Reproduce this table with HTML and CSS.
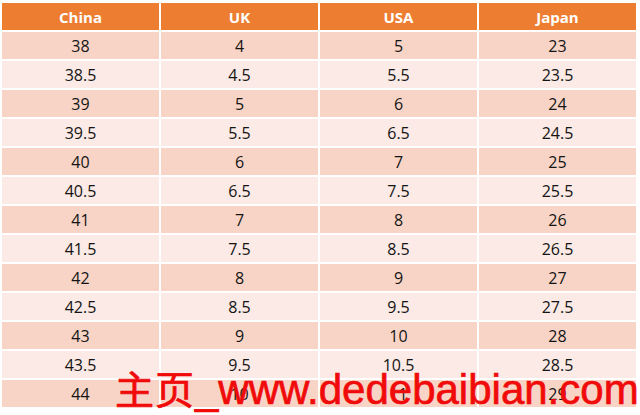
FILE: index.html
```html
<!DOCTYPE html>
<html>
<head>
<meta charset="utf-8">
<link rel="stylesheet" href="styles.css">
</head>
<body>
<div class="page">
  <div class="table">
    <div class="cell head">China</div><div class="cell head">UK</div><div class="cell head">USA</div><div class="cell head">Japan</div>
    <div class="cell odd">38</div><div class="cell odd">4</div><div class="cell odd">5</div><div class="cell odd">23</div>
    <div class="cell even">38.5</div><div class="cell even">4.5</div><div class="cell even">5.5</div><div class="cell even">23.5</div>
    <div class="cell odd">39</div><div class="cell odd">5</div><div class="cell odd">6</div><div class="cell odd">24</div>
    <div class="cell even">39.5</div><div class="cell even">5.5</div><div class="cell even">6.5</div><div class="cell even">24.5</div>
    <div class="cell odd">40</div><div class="cell odd">6</div><div class="cell odd">7</div><div class="cell odd">25</div>
    <div class="cell even">40.5</div><div class="cell even">6.5</div><div class="cell even">7.5</div><div class="cell even">25.5</div>
    <div class="cell odd">41</div><div class="cell odd">7</div><div class="cell odd">8</div><div class="cell odd">26</div>
    <div class="cell even">41.5</div><div class="cell even">7.5</div><div class="cell even">8.5</div><div class="cell even">26.5</div>
    <div class="cell odd">42</div><div class="cell odd">8</div><div class="cell odd">9</div><div class="cell odd">27</div>
    <div class="cell even">42.5</div><div class="cell even">8.5</div><div class="cell even">9.5</div><div class="cell even">27.5</div>
    <div class="cell odd">43</div><div class="cell odd">9</div><div class="cell odd">10</div><div class="cell odd">28</div>
    <div class="cell even">43.5</div><div class="cell even">9.5</div><div class="cell even">10.5</div><div class="cell even">28.5</div>
    <div class="cell odd">44</div><div class="cell odd">10</div><div class="cell odd">11</div><div class="cell odd">29</div>
  </div>
  <div class="watermark"><span class="wm-cjk">主页</span><span class="wm-latin">_www.dedebaibian.com</span></div>
</div>
</body>
</html>
```
FILE: styles.css
```css
html, body {
  margin: 0;
  padding: 0;
  background: #ffffff;
}
.page {
  position: relative;
  width: 640px;
  height: 415px;
  padding: 3px 0 0 2px;
  box-sizing: border-box;
  overflow: hidden;
}
.table {
  display: grid;
  grid-template-columns: repeat(4, 157px);
  grid-auto-rows: 27px;
  gap: 2px;
  width: 634px;
}
.cell {
  display: flex;
  align-items: center;
  justify-content: center;
  font-family: "Open Sans", "Liberation Sans", sans-serif;
  font-size: 16px;
  color: #141414;
}
.head {
  background: #ed7d31;
  color: #ffffff;
  font-weight: 700;
  font-size: 15px;
}
.odd {
  background: #f8d4c6;
}
.even {
  background: #fbeae5;
}
.watermark {
  position: absolute;
  left: 115px;
  top: 364px;
  display: flex;
  align-items: baseline;
  height: 46px;
  color: #f00a0a;
  white-space: nowrap;
  -webkit-text-stroke: 0.7px #f00a0a;
}
.wm-cjk {
  font-family: "Noto Sans CJK SC", sans-serif;
  font-size: 39px;
  line-height: 46px;
  letter-spacing: 1px;
}
.wm-latin {
  font-family: "Liberation Sans", "Noto Sans", sans-serif;
  font-size: 42px;
  line-height: 46px;
}
```
